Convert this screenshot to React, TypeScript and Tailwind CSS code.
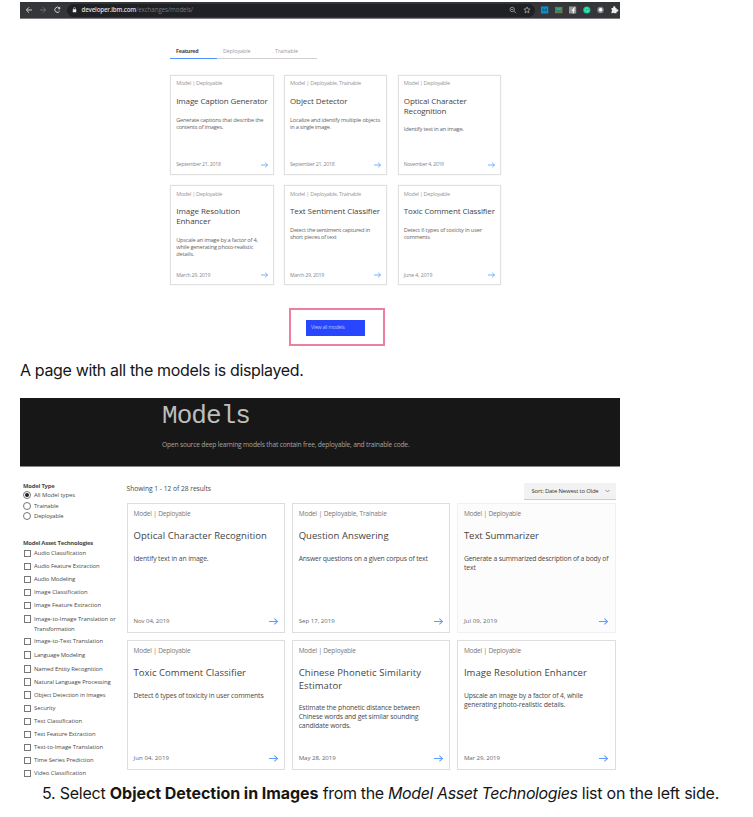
import { useLayoutEffect, useRef } from 'react';

type Line = [string, number];

/* Text on one line, tracked so that it spans the given width. */
function Fit({ t, w, className = '' }: { t: string; w: number; className?: string }) {
  const ref = useRef<HTMLSpanElement>(null);
  useLayoutEffect(() => {
    const el = ref.current;
    if (!el) return;
    el.style.letterSpacing = '0px';
    const natural = el.getBoundingClientRect().width;
    el.style.letterSpacing = `${(w - natural) / t.length}px`;
  }, [t, w]);
  return (
    <span ref={ref} className={`inline-block shrink-0 whitespace-pre ${className}`}>
      {t}
    </span>
  );
}

function Lines({ lines, className }: { lines: Line[]; className: string }) {
  return (
    <div className={className}>
      {lines.map(([t, w]) => (
        <div key={t} className="flex">
          <Fit t={t} w={w} />
        </div>
      ))}
    </div>
  );
}

function Arrow({ className }: { className: string }) {
  return (
    <svg viewBox="0 0 16 12" className={className} fill="none" stroke="#5c9bff" strokeWidth="1.8">
      <path d="M0 6h15M9.5 0.8L15 6l-5.500 5.200" />
    </svg>
  );
}

type Card = { label: Line; title: Line[]; desc: Line[]; date: Line; soft?: boolean };

const D: Line = ['Model | Deployable', 46];
const DT: Line = ['Model | Deployable, Trainable', 71];
const featured: Card[] = [
  { label: D, title: [['Image Caption Generator', 91.5]], desc: [['Generate captions that describe the', 87], ['contents of images.', 47]], date: ['September 21, 2018', 44.5] },
  { label: DT, title: [['Object Detector', 57.5]], desc: [['Localize and identify multiple objects', 90], ['in a single image.', 41]], date: ['September 21, 2018', 44.5] },
  { label: D, title: [['Optical Character', 63], ['Recognition', 42.5]], desc: [['Identify text in an image.', 60]], date: ['November 4, 2019', 40] },
  { label: D, title: [['Image Resolution', 64], ['Enhancer', 34.5]], desc: [['Upscale an image by a factor of 4,', 81.5], ['while generating photo-realistic', 77], ['details.', 18]], date: ['March 29, 2019', 34] },
  { label: DT, title: [['Text Sentiment Classifier', 90]], desc: [['Detect the sentiment captured in', 80], ['short pieces of text', 46.5]], date: ['March 29, 2019', 34] },
  { label: D, title: [['Toxic Comment Classifier', 91]], desc: [['Detect 6 types of toxicity in user', 78], ['comments', 26]], date: ['June 4, 2019', 28.5] },
];

const E: Line = ['Model | Deployable', 57];
const ET: Line = ['Model | Deployable, Trainable', 88];
const models: Card[] = [
  { label: E, title: [['Optical Character Recognition', 133.5]], desc: [['Identify text in an image.', 75]], date: ['Nov 04, 2019', 36] },
  { label: ET, title: [['Question Answering', 90]], desc: [['Answer questions on a given corpus of text', 129]], date: ['Sep 17, 2019', 36] },
  { label: E, title: [['Text Summarizer', 75]], desc: [['Generate a summarized description of a body of', 144.5], ['text', 12]], date: ['Jul 09, 2019', 33.5], soft: true },
  { label: E, title: [['Toxic Comment Classifier', 112.5]], desc: [['Detect 6 types of toxicity in user comments', 130]], date: ['Jun 04, 2019', 35.5] },
  { label: E, title: [['Chinese Phonetic Similarity', 122.5], ['Estimator', 43.5]], desc: [['Estimate the phonetic distance between', 121], ['Chinese words and get similar sounding', 119.5], ['candidate words.', 52]], date: ['May 28, 2019', 37] },
  { label: E, title: [['Image Resolution Enhancer', 123]], desc: [['Upscale an image by a factor of 4, while', 119], ['generating photo-realistic details.', 101.5]], date: ['Mar 29, 2019', 36] },
];

function FeaturedCard({ c }: { c: Card }) {
  return (
    <div className="flex h-[100px] flex-col border border-[#e0e0e0] pt-[3.500px] pr-[5.500px] pl-[5px] shadow-[0_0_1px_#e0e0e0]">
      <Lines lines={[c.label]} className="text-[5.600px] leading-[8px] text-[#999]" />
      <Lines lines={c.title} className="mt-[8.800px] text-[8px] leading-[9.700px] font-medium text-[#444]" />
      <Lines lines={c.desc} className="mt-[11.200px] text-[5.700px] leading-[7px] font-medium text-[#666]" />
      <div className="mt-auto mb-[4.500px] flex h-[9px] items-center justify-between text-[5.200px] leading-[9px] font-medium text-[#888]">
        <Fit t={c.date[0]} w={c.date[1]} />
        <Arrow className="mr-[-0.500px] h-[6px] w-[7px]" />
      </div>
    </div>
  );
}

function ModelCard({ c }: { c: Card }) {
  return (
    <div className={`flex h-[130.500px] flex-col border pr-[6.500px] pl-[6px] pt-[5px] ${c.soft ? 'border-[#f1f1f1] bg-[#fcfcfc]' : 'border-[#dedede]'}`}>
      <Lines lines={[c.label]} className="text-[6.500px] leading-[9px] text-[#777]" />
      <Lines lines={c.title} className="mt-[12.800px] text-[9.500px] leading-[12.300px] font-medium text-[#444]" />
      <Lines lines={c.desc} className="mt-[11.200px] text-[6.800px] leading-[9.200px] font-medium text-[#4a4a4a]" />
      <div className="mt-auto mb-[6px] flex h-[10px] items-center justify-between text-[6.100px] leading-[10px] font-medium text-[#666]">
        <Fit t={c.date[0]} w={c.date[1]} />
        <Arrow className="h-[7px] w-[9px]" />
      </div>
    </div>
  );
}

const radios: Line[] = [['All Model types', 41], ['Trainable', 24.5], ['Deployable', 29.5]];

/* Label, width and row height of every technology. */
const techs: [string, number, number][] = [
  ['Audio Classification', 52, 13.1], ['Audio Feature Extraction', 65.5, 13.1], ['Audio Modeling', 41, 13.1],
  ['Image Classification', 53.5, 13.1], ['Image Feature Extraction', 67, 13.1], ['Image-to-Image Translation or', 81.5, 22.9],
  ['Image-to-Text Translation', 69, 13.1], ['Language Modeling', 51, 14.2], ['Named Entity Recognition', 68.5, 13.1],
  ['Natural Language Processing', 76.5, 13.1], ['Object Detection in Images', 71.5, 13.1], ['Security', 21.5, 13.1],
  ['Text Classification', 48, 13.1], ['Text Feature Extraction', 61.5, 13.1], ['Text-to-Image Translation', 69, 13.1],
  ['Time Series Prediction', 59.5, 13.1], ['Video Classification', 52, 13.1],
];

function Toolbar() {
  return (
    <div className="flex h-[17px] items-center border-b border-[#7c7d80] bg-[#35363a] pl-[5px]">
      <svg viewBox="0 0 42 12" className="h-[12px] w-[42px]" fill="none" strokeWidth="1">
        <path d="M7 6H1.500M4 3.300L1.300 6 4 8.700" stroke="#ccc" />
        <path d="M15 6h5.500M18 3.300L20.700 6 18 8.700" stroke="#6b6c70" />
        <path d="M34.500 4.200A2.600 2.600 0 1 0 34.700 7" stroke="#ccc" />
        <path d="M35.200 2.600v2.600h-2.600z" fill="#ccc" />
      </svg>
      <div className="flex h-[13px] w-[468px] items-center rounded-full bg-[#202124] pl-[5px] text-[6.200px] leading-[12px]">
        <svg viewBox="0 0 6 8" className="h-[6px] w-[5px]">
          <path d="M1.700 3V2a1.300 1.300 0 0 1 2.600 0v1" fill="none" stroke="#ddd" strokeWidth=".8" />
          <rect x=".7" y="3" width="4.600" height="4" fill="#eee" />
        </svg>
        <Fit t="developer.ibm.com" w={54.5} className="ml-[4.500px] font-semibold text-[#ddd]" />
        <Fit t="/exchanges/models/" w={57} className="font-medium text-[#77787c]" />
        <svg viewBox="0 0 24 10" className="mr-[3px] ml-auto h-[10px] w-[24px]" fill="none" stroke="#98999b" strokeWidth=".9">
          <circle cx="4.200" cy="4.500" r="2.200" />
          <path d="M6 6.200l2 2M3.200 4.500h2" />
          <path d="M19 1.900l.9 2 2.200.2-1.700 1.500.5 2.200-1.900-1.200-1.900 1.200.5-2.200-1.700-1.500 2.200-.2z" />
        </svg>
      </div>
      <svg viewBox="0 0 85 12" className="h-[12px] w-[85px]">
        <rect x="6" y="2.500" width="7.300" height="7" fill="#0d8fc9" />
        <path d="M8 7.500V4.800l1.600 1.500 1.600-1.500v2.700" fill="none" stroke="#07547b" strokeWidth=".9" />
        <rect x="20.500" y="3.300" width="6.500" height="5.500" fill="#26877b" stroke="#a87632" strokeWidth=".7" />
        <path d="M21.500 5h4.500" stroke="#66ad75" />
        <rect x="34" y="2.500" width="7.200" height="7" fill="#999" />
        <path d="M40 4h-.7q-1 0-1 1v4.500M36.800 6.200h3" fill="none" stroke="#fff" />
        <circle cx="51.800" cy="6" r="3.600" fill="#12c896" />
        <path d="M53.300 4.800a1.900 1.900 0 1 0 .3 1.700h-1.500" fill="none" stroke="#a0f0d8" strokeWidth=".6" />
        <circle cx="65.500" cy="6" r="3.200" fill="#8b8b8b" />
        <circle cx="65.600" cy="5.700" r="1.700" fill="#fff" />
        <path d="M77 4h1.700a1.200 1.200 0 1 1 2.100 0H82v1.500a1.200 1.200 0 1 1 0 2V9.300h-1.900a1.100 1.100 0 0 0-2 0H77V7.600a1.200 1.200 0 0 0 0-2z" transform="translate(-0.500 0)" fill="#eee" />
      </svg>
    </div>
  );
}

export default function App() {
  return (
    <div className="h-[817px] w-[753px] overflow-hidden bg-white pt-[2px] pl-[20px] font-['Open_Sans',sans-serif]">
      <section className="h-[355px] w-[600px]">
        <Toolbar />
        <div className="ml-[150px] flex pt-[28px] text-[5.300px] leading-[9px]">
          <div className="h-[12px] w-[47px] border-b border-[#5292ff] pl-[6px] font-bold text-[#444]"><Fit t="Featured" w={22.5} /></div>
          <div className="h-[12px] w-[53px] border-b border-[#d0d0d0] pl-[6px] font-medium text-[#999]"><Fit t="Deployable" w={27.5} /></div>
          <div className="h-[12px] w-[47px] border-b border-[#d0d0d0] pl-[5px] font-medium text-[#999]"><Fit t="Trainable" w={23} /></div>
        </div>
        <div className="mt-[15.500px] ml-[150.200px] grid grid-cols-[103.500px_103.500px_103.500px] gap-x-[10.300px] gap-y-[10.700px]">
          {featured.map((c) => <FeaturedCard key={c.title[0][0]} c={c} />)}
        </div>
        <div className="mt-[23px] ml-[269px] h-[37.500px] w-[96px] border-2 border-[#ec7f9e] pt-[9.800px] pl-[15px]">
          <div className="flex h-[16px] w-[59px] items-center bg-[#2946ff] pl-[5px] text-[5.300px] text-[#b4beff]">
            <Fit t="View all models" w={33.5} />
          </div>
        </div>
      </section>

      <p className="flex h-[41px] pt-[1px] font-['Inter',sans-serif] text-[16px] leading-[24px] text-[#161616]">
        <Fit t="A page with all the models is displayed." w={283.5} />
      </p>

      <section className="h-[382px] w-[600px]">
        <header className="h-[69px] border-b border-[#888] bg-[#171717] pl-[142px]">
          <div className="flex h-[34px] pt-[1px] font-['Liberation_Mono',monospace] text-[26px] leading-[34px] text-[#bdbdbd]">
            <Fit t="Models" w={88} />
          </div>
          <div className="mt-[8px] flex text-[6.700px] leading-[9px] text-[#a4a4a4]">
            <Fit t="Open source deep learning models that contain free, deployable, and trainable code." w={247.5} />
          </div>
        </header>
        <div className="flex">
          <aside className="w-[106.500px] pt-[14px] pl-[3px] text-[5.900px] font-medium text-[#4a4a4a]">
            <div className="flex leading-[10px] font-bold"><Fit t="Model Type" w={31.5} /></div>
            <div className="-mt-[1px]">
              {radios.map(([t, w], i) => (
                <div key={t} className="flex h-[10.600px] items-center leading-[10px]">
                  <span className="mr-[3px] flex size-[8px] items-center justify-center rounded-full border border-[#777]">
                    {i === 0 && <span className="size-[4px] rounded-full bg-[#222]" />}
                  </span>
                  <Fit t={t} w={w} />
                </div>
              ))}
            </div>
            <div className="mt-[16.300px] flex leading-[10px] font-bold"><Fit t="Model Asset Technologies" w={70} /></div>
            {techs.map(([t, w, h]) => (
              <div key={t} className="flex leading-[10px]" style={{ height: h }}>
                <span className="mt-[1.500px] mr-[3px] ml-[0.500px] size-[7.500px] shrink-0 border border-[#777]" />
                <div>
                  <div className="flex"><Fit t={t} w={w} /></div>
                  {h > 20 && <div className="flex"><Fit t="Transformation" w={40.5} /></div>}
                </div>
              </div>
            ))}
          </aside>
          <main>
            <div className="flex h-[35.500px] w-[489px] justify-between pt-[16px]">
              <div className="pt-[0.500px] text-[6.700px] leading-[9px] font-medium text-[#4a4a4a]"><Fit t="Showing 1 - 12 of 28 results" w={84.5} /></div>
              <div className="flex h-[17px] w-[91.500px] items-center justify-between border-b border-[#ccc] bg-[#f2f2f2] pr-[6px] pl-[7.500px] text-[5.900px] font-medium text-[#333]">
                <Fit t="Sort: Date Newest to Olde" w={67} />
                <svg viewBox="0 0 6 4" className="h-[4px] w-[5px]" fill="none" stroke="#666" strokeWidth=".8"><path d="M.5.7L3 3.200 5.500.7" /></svg>
              </div>
            </div>
            <div className="grid grid-cols-[158.800px_158.800px_158.800px] gap-x-[6.400px] gap-y-[6.500px]">
              {models.map((c) => <ModelCard key={c.title[0][0]} c={c} />)}
            </div>
          </main>
        </div>
      </section>

      <p className="flex pl-[22px] pt-[1px] font-['Inter',sans-serif] text-[16px] leading-[24px] text-[#161616]">
        <Fit t="5. Select " w={67.8} />
        <Fit t="Object Detection in Images" w={208.7} className="font-bold" />
        <Fit t=" from the " w={69.5} />
        <Fit t="Model Asset Technologies" w={189.5} className="italic" />
        <Fit t=" list on the left side." w={141.5} />
      </p>
    </div>
  );
}
